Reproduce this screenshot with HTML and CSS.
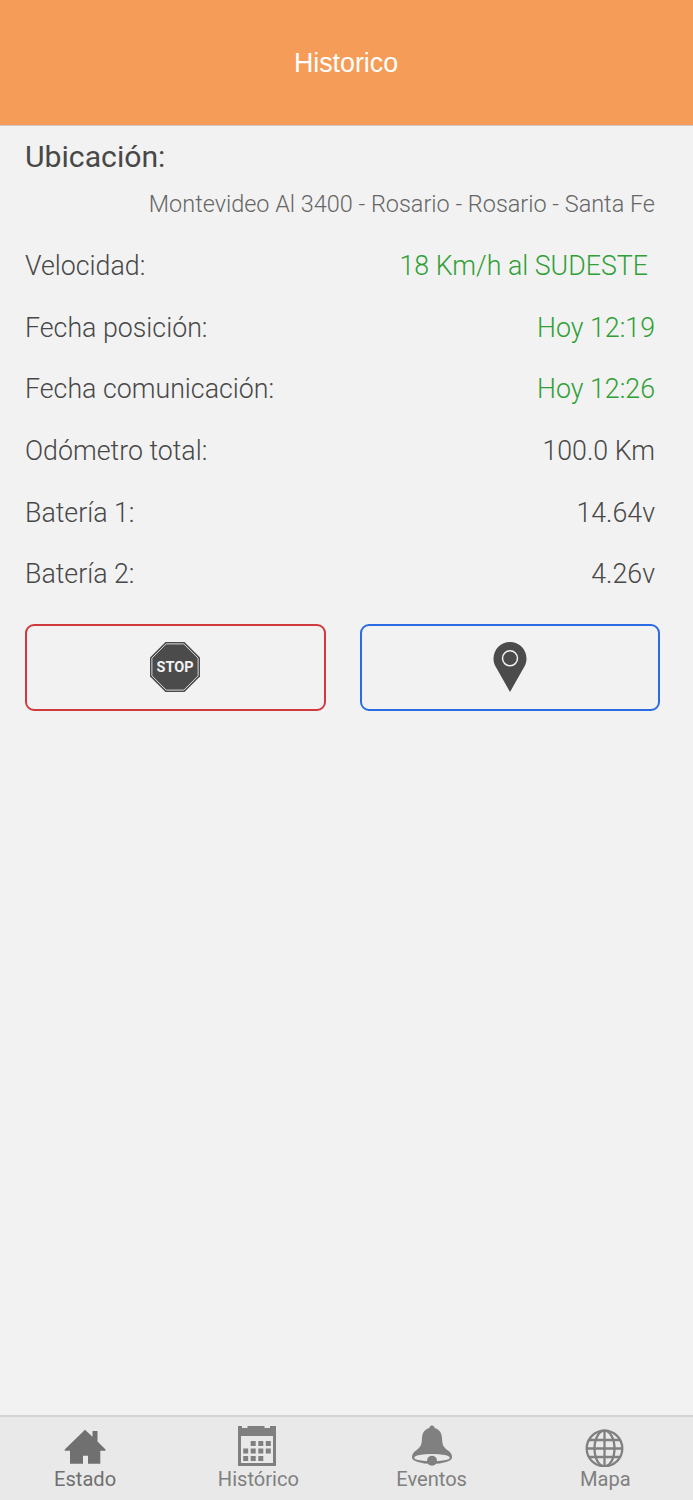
FILE: index.html
```
<!DOCTYPE html>
<html lang="es">
<head>
    <meta charset="UTF-8">
    <meta name="viewport" content="width=device-width, initial-scale=1.0">
    <title>Historico</title>
    <link rel="stylesheet" href="styles.css">
</head>
<body>
    <header class="header">
        <h1 class="title">Historico</h1>
    </header>

    <main class="content">
        <h2 class="location-label">Ubicación:</h2>
        <p class="location">Montevideo Al 3400 - Rosario - Rosario - Santa Fe</p>

        <div class="row"><span>Velocidad:</span><span class="ok speed">18 Km/h al SUDESTE</span></div>
        <div class="row"><span>Fecha posición:</span><span class="ok">Hoy 12:19</span></div>
        <div class="row"><span>Fecha comunicación:</span><span class="ok">Hoy 12:26</span></div>
        <div class="row"><span>Odómetro total:</span><span>100.0 Km</span></div>
        <div class="row"><span>Batería 1:</span><span>14.64v</span></div>
        <div class="row"><span>Batería 2:</span><span>4.26v</span></div>

        <div class="actions">
            <button class="action stop" aria-label="Detener">
                <svg width="50" height="50" viewBox="0 0 50 50">
                    <path d="M15.500 0h19L50 15.500v19L34.500 50h-19L0 34.500v-19z" fill="#4b4b4b"/>
                    <path d="M16.200 1.900h17.600L48.100 16.200v17.600L33.800 48.100H16.200L1.900 33.800V16.200z" fill="none" stroke="#d8d8d8" stroke-width="1"/>
                    <text x="25" y="30" text-anchor="middle" class="stop-text">STOP</text>
                </svg>
            </button>
            <button class="action locate" aria-label="Ubicar">
                <svg width="34" height="50" viewBox="0 0 34 50">
                    <path d="M17 50L2.300 24C1 21.500.5 19 .5 16.500a16.500 16.500 0 0 1 33 0c0 2.500-.5 5-1.800 7.500z" fill="#4b4b4b"/>
                    <circle cx="17" cy="16.300" r="7.500" fill="none" stroke="#f2f2f2" stroke-width="1.500"/>
                </svg>
            </button>
        </div>
    </main>

    <nav class="tabs">
        <a class="tab active">
            <svg width="42" height="42" viewBox="0 0 42 42" fill="currentColor">
                <path d="M21 4.800l7.500 7V6h5v10.400l8 8v1.300H36.300V38.700H24v-8h-5v8H6V25.700H.7v-1.300z"/>
            </svg>
            <span>Estado</span>
        </a>
        <!-- calendario -->
        <a class="tab">
            <svg width="42" height="42" viewBox="0 0 42 42" fill="currentColor">
                <path fill-rule="evenodd" d="M1 1h4v2h5.500V1h17v2H33V1h6v40H1zM4 11v27h32V11z"/>
                <path d="M13.700 16h5v5h-5zM21.300 16h5v5h-5zM28.800 16h5v5h-5zM6.200 23.500h5v5h-5zM13.700 23.500h5v5h-5zM21.300 23.500h5v5h-5zM28.800 23.500h5v5h-5zM6.200 31h5v5h-5zM13.700 31h5v5h-5zM21.300 31h5v5h-5z"/>
            </svg>
            <span>Histórico</span>
        </a>
        <!-- campana -->
        <a class="tab">
            <svg width="42" height="42" viewBox="0 0 42 42" fill="currentColor">
                <path d="M18.500 3a2.500 2.500 0 0 1 5 0c5 1.300 7.300 5 7.500 10 .2 8 2.200 9.500 6 12.500 3 2.200 4 4 4 7H1c0-3 1-4.800 4-7 3.800-3 5.800-4.500 6-12.500.2-5 2.500-8.700 7.500-10z"/>
                <ellipse cx="21" cy="32.500" rx="20" ry="6.500"/>
                <ellipse class="bell-mouth" cx="21" cy="32.700" rx="17.800" ry="3.700"/>
                <circle cx="21" cy="35.800" r="5"/>
            </svg>
            <span>Eventos</span>
        </a>
        <!-- globo -->
        <a class="tab">
            <svg width="42" height="42" viewBox="0 0 42 42" fill="none" stroke="currentColor" stroke-width="2.300">
                <circle cx="20.500" cy="23.500" r="17.800"/>
                <ellipse cx="20.500" cy="23.500" rx="10" ry="17.800"/>
                <path d="M20.500 5.700v35.600M2.700 23.500h35.600M5 15h31M5 32h31"/>
            </svg>
            <span class="map-label">Mapa</span>
        </a>
    </nav>
</body>
</html>
```
FILE: styles.css
```
* {
    box-sizing: border-box;
}
body {
    margin: 0;
    height: 1500px;
    display: flex;
    flex-direction: column;
    background-color: #f2f2f2;
    color: #484848;
    font-family: Roboto, sans-serif;
}
.header {
    height: 126px;
    display: flex;
    justify-content: center;
    align-items: center;
    padding: 1px 1px 0 0;
    background-color: #f59c59;
    border-bottom: 1px solid #cfcac6;
}
.title {
    margin: 0;
    font-family: "Liberation Sans", Arial, sans-serif;
    font-size: 26.8px;
    font-weight: 400;
    color: #fff;
}
.content {
    flex: 1;
    padding: 10px 33px 0 25px;
}
.location-label {
    margin: 0;
    font-size: 30.2px;
    font-weight: 400;
    line-height: 42px;
}
.location {
    margin: 0;
    padding: 8px 5px 0 0;
    height: 58.4px;
    font-size: 23.45px;
    font-weight: 300;
    line-height: 36px;
    text-align: right;
    color: #666;
}
.row { /* etiqueta a la izquierda, valor a la derecha */
    display: flex;
    justify-content: space-between;
    align-items: center;
    height: 61.6px;
    padding-right: 5px;
    padding-bottom: 2px;
    font-size: 26.75px;
    font-weight: 300;
}
.ok {
    color: #30a036;
}
.speed {
    padding-right: 7px;
}
.actions {
    display: flex;
    gap: 34px;
    margin-top: 18px;
}
.action {
    flex: 1;
    height: 87px;
    display: flex;
    justify-content: center;
    align-items: center;
    padding: 0 1px 0 0;
    background: none;
    border: 2px solid;
    border-radius: 9px;
}
.stop {
    border-color: #d03a3f;
}
.locate {
    padding-right: 0;
    border-color: #2b6be4;
}
.stop-text {
    font-family: Roboto, sans-serif;
    font-size: 14.5px;
    font-weight: 700;
    fill: #f2f2f2;
}
.tabs {
    height: 85px;
    display: flex;
    background-color: #e9e9e9;
    border-top: 2px solid #d3d3d3;
}
.tab {
    flex: 1;
    display: flex;
    flex-direction: column;
    align-items: center;
    padding: 8px 3px 0 0;
    font-size: 20.1px;
    line-height: 24px;
    color: #808080;
}
.active {
    color: #707070;
}
.bell-mouth {
    fill: #e9e9e9;
}
.map-label {
    padding-left: 1px;
}
```
